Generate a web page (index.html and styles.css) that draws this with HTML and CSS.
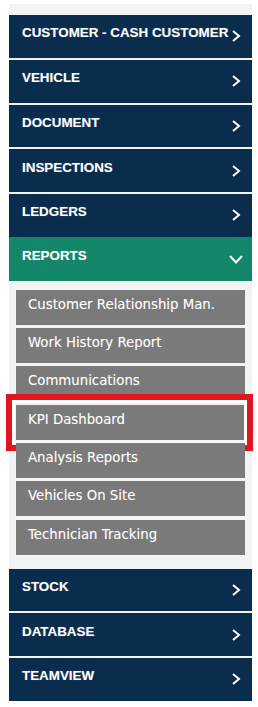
FILE: index.html
```html
<!DOCTYPE html>
<html lang="en">
<head>
    <meta charset="UTF-8">
    <meta name="viewport" content="width=device-width, initial-scale=1.0">
    <title>Menu</title>
    <link rel="stylesheet" href="styles.css">
</head>
<body>
    <nav class="sidebar">
        <a class="nav-item" href="#">CUSTOMER - CASH CUSTOMER
            <svg class="chevron" width="10" height="12" viewBox="0 0 10 12"><path d="M2 1 L8 6 L2 11" /></svg>
        </a>
        <a class="nav-item" href="#">VEHICLE
            <svg class="chevron" width="10" height="12" viewBox="0 0 10 12"><path d="M2 1 L8 6 L2 11" /></svg>
        </a>
        <a class="nav-item" href="#">DOCUMENT
            <svg class="chevron" width="10" height="12" viewBox="0 0 10 12"><path d="M2 1 L8 6 L2 11" /></svg>
        </a>
        <a class="nav-item" href="#">INSPECTIONS
            <svg class="chevron" width="10" height="12" viewBox="0 0 10 12"><path d="M2 1 L8 6 L2 11" /></svg>
        </a>
        <a class="nav-item" href="#">LEDGERS
            <svg class="chevron" width="10" height="12" viewBox="0 0 10 12"><path d="M2 1 L8 6 L2 11" /></svg>
        </a>
        <div class="nav-group">
            <a class="nav-item active" href="#">REPORTS
                <svg class="chevron-down" width="14" height="9" viewBox="0 0 14 9"><path d="M1 1 L7 7.5 L13 1" /></svg>
            </a>
            <ul class="submenu">
                <li><a href="#">Customer Relationship Man.</a></li>
                <li><a href="#">Work History Report</a></li>
                <li><a href="#">Communications</a></li>
                <li class="highlighted"><a href="#">KPI Dashboard</a></li>
                <li><a href="#">Analysis Reports</a></li>
                <li><a href="#">Vehicles On Site</a></li>
                <li><a href="#">Technician Tracking</a></li>
            </ul>
        </div>
        <a class="nav-item" href="#">STOCK
            <svg class="chevron" width="10" height="12" viewBox="0 0 10 12"><path d="M2 1 L8 6 L2 11" /></svg>
        </a>
        <a class="nav-item" href="#">DATABASE
            <svg class="chevron" width="10" height="12" viewBox="0 0 10 12"><path d="M2 1 L8 6 L2 11" /></svg>
        </a>
        <a class="nav-item" href="#">TEAMVIEW
            <svg class="chevron" width="10" height="12" viewBox="0 0 10 12"><path d="M2 1 L8 6 L2 11" /></svg>
        </a>
    </nav>
</body>
</html>
```

FILE: styles.css
```css
body {
    margin: 0;
    padding: 4px 6px 8px 9px;
    background-color: #ffffff;
}
.sidebar {
    display: flex;
    flex-direction: column;
    gap: 2px;
    padding-top: 11px;
    background-color: #f2f3f4;
}
.nav-item {
    display: flex;
    justify-content: space-between;
    align-items: center;
    box-sizing: border-box;
    height: 42.75px;
    padding: 0 11px 0 13px;
    background-color: #0b2d4d;
    color: white;
    text-decoration: none;
    font-family: "Liberation Sans", Arial, sans-serif;
    font-weight: bold;
    font-size: 13.4px;
    line-height: 16px;
    text-shadow: 0 0 1px rgba(255,255,255,0.3);
}
/* label sits a little above the middle, arrow stays centred */
.nav-item {
    padding-bottom: 6px;
}
.nav-item .chevron {
    margin-top: 6px;
}
.nav-group {
    margin-top: -2px;
}
.nav-item.active {
    height: 44px;
    background-color: #14866a;
    padding-right: 9px;
}
.nav-item.active .chevron-down {
    margin-top: 8px;
}
.chevron path,
.chevron-down path {
    fill: none;
    stroke: white;
    stroke-width: 2;
}
.submenu {
    list-style: none;
    margin: 0;
    padding: 9px 7px 12px 7px;
    display: flex;
    flex-direction: column;
    gap: 3.3px;
}
.submenu li {
    position: relative;
}
.submenu a {
    display: block;
    box-sizing: border-box;
    height: 35px;
    padding: 7px 12px 0 12px;
    background-color: #7a7a7a;
    color: white;
    text-decoration: none;
    font-family: "DejaVu Sans", Verdana, sans-serif;
    font-size: 13.3px;
    line-height: 16px;
    white-space: nowrap;
    text-shadow: 0 0 1px rgba(255,255,255,0.25);
}
.submenu li.highlighted::after {
    content: "";
    position: absolute;
    top: -11px;
    bottom: -11px;
    left: -10px;
    right: -8px;
    border: 6px solid #e3141f;
    box-shadow: inset 0 0 0 3px #ffffff;
}
```
